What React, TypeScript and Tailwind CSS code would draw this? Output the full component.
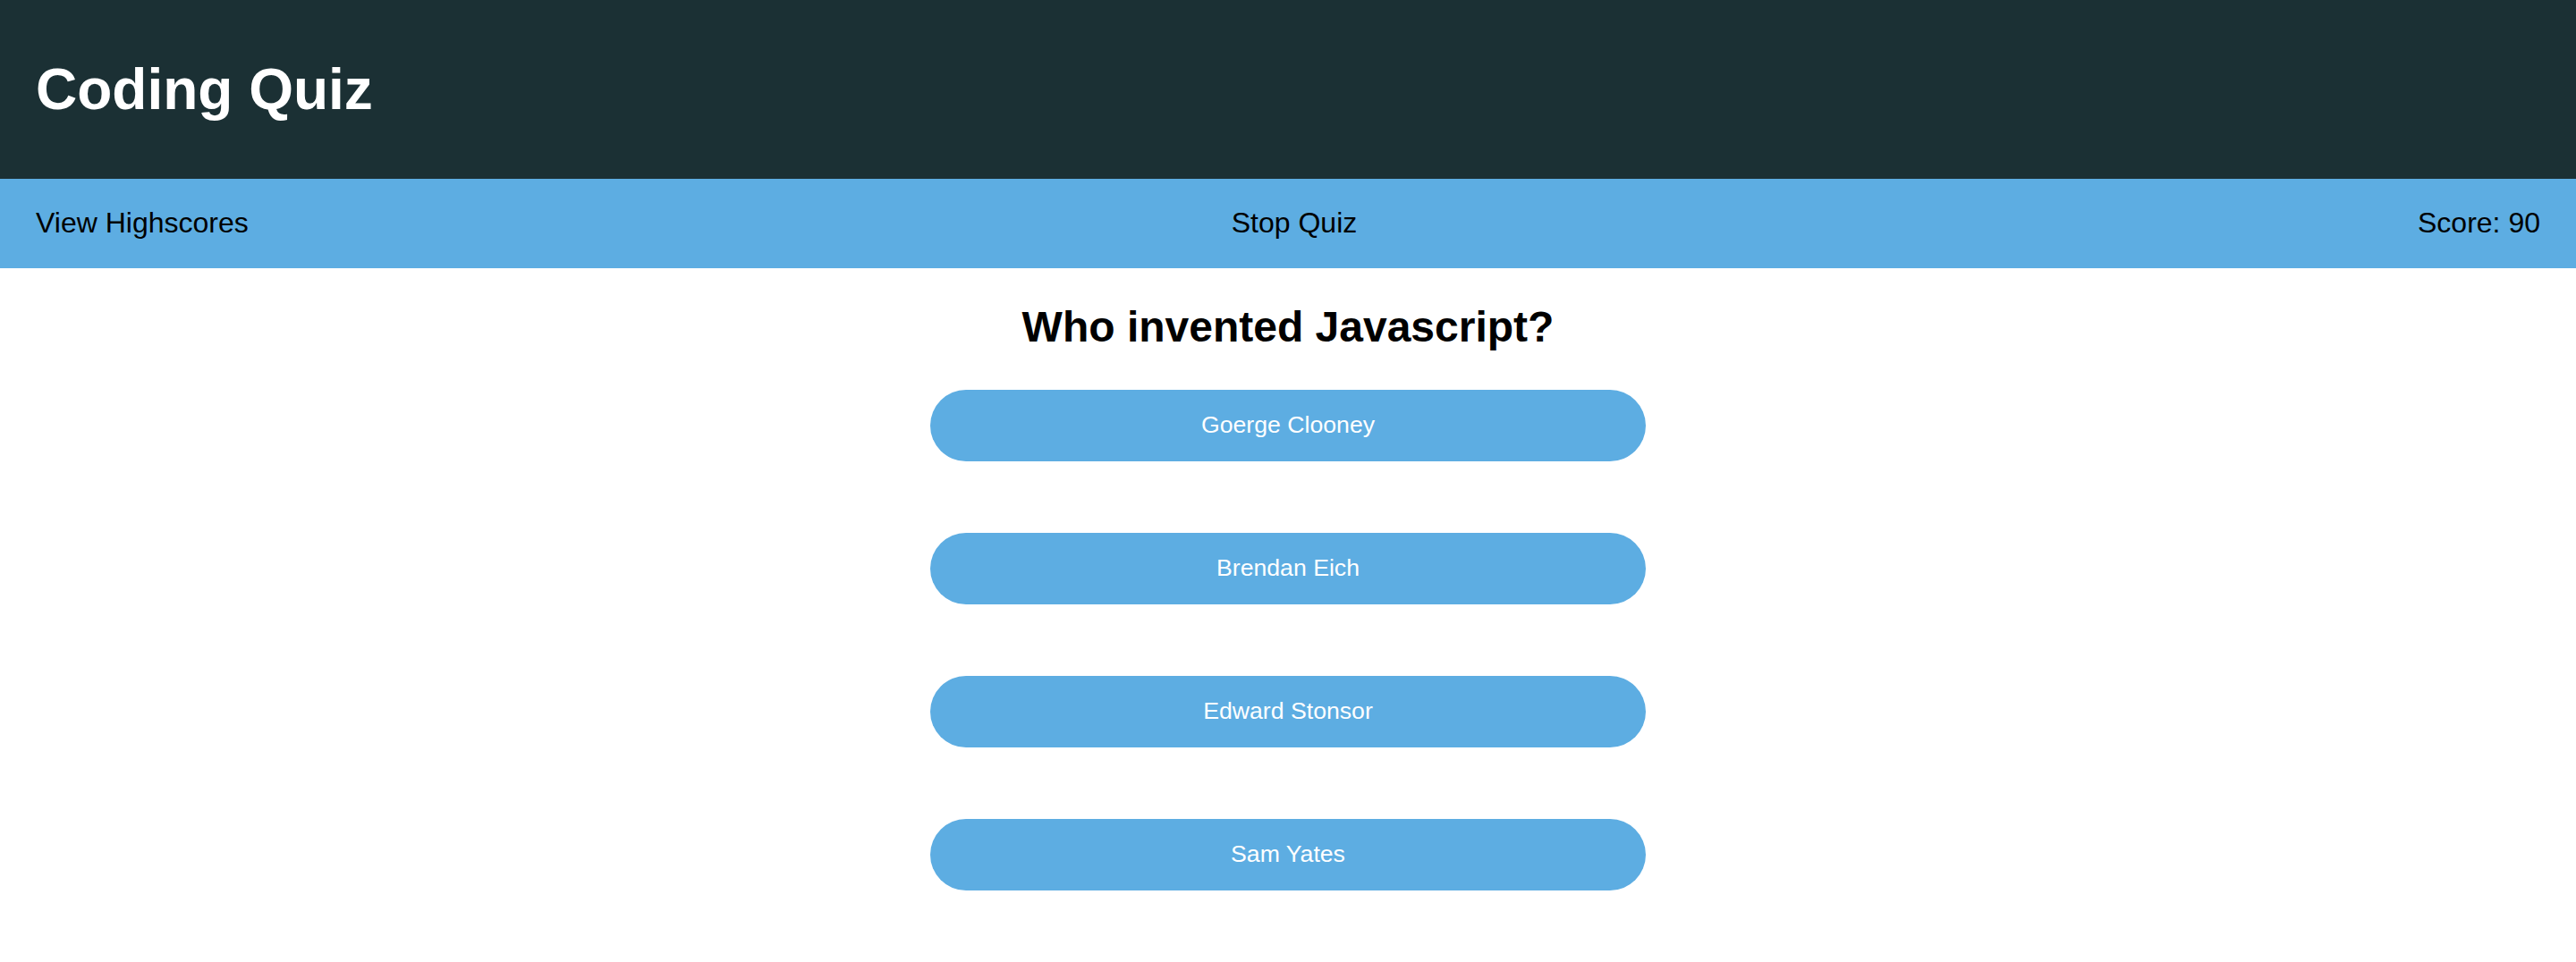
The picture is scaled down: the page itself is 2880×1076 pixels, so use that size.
import React from "react";

type Choice = {
  id: number;
  label: string;
};

const choices: Array<Choice> = [
  { id: 1, label: "Goerge Clooney" },
  { id: 2, label: "Brendan Eich" },
  { id: 3, label: "Edward Stonsor" },
  { id: 4, label: "Sam Yates" },
];

const App: React.FC = () => {
  return (
    <div className="min-h-screen bg-white font-['Liberation_Sans',Arial,sans-serif] text-black">
      <header className="flex h-[200px] items-center bg-[#1b3034] px-[40px]">
        <h1 className="text-[64px] font-bold text-white">Coding Quiz</h1>
      </header>

      <nav className="grid h-[100px] grid-cols-3 items-center bg-[#5dade2] px-[40px] pb-[3px] text-[32px]">
        <a className="cursor-pointer justify-self-start">View Highscores</a>
        <a className="cursor-pointer justify-self-center pl-[14px]">Stop Quiz</a>
        <span className="justify-self-end">Score: 90</span>
      </nav>

      <main className="flex flex-col items-center">
        <h2 className="mt-[38px] mb-[42px] text-[48px] leading-[56px] font-bold">
          Who invented Javascript?
        </h2>
        <div className="flex flex-col gap-[80px]">
          {choices.map((choice) => (
            <button
              key={choice.id}
              className="h-[80px] w-[800px] cursor-pointer rounded-full bg-[#5dade2] pb-[3px] text-[26.67px] text-white"
            >
              {choice.label}
            </button>
          ))}
        </div>
      </main>
    </div>
  );
};

export default App;
